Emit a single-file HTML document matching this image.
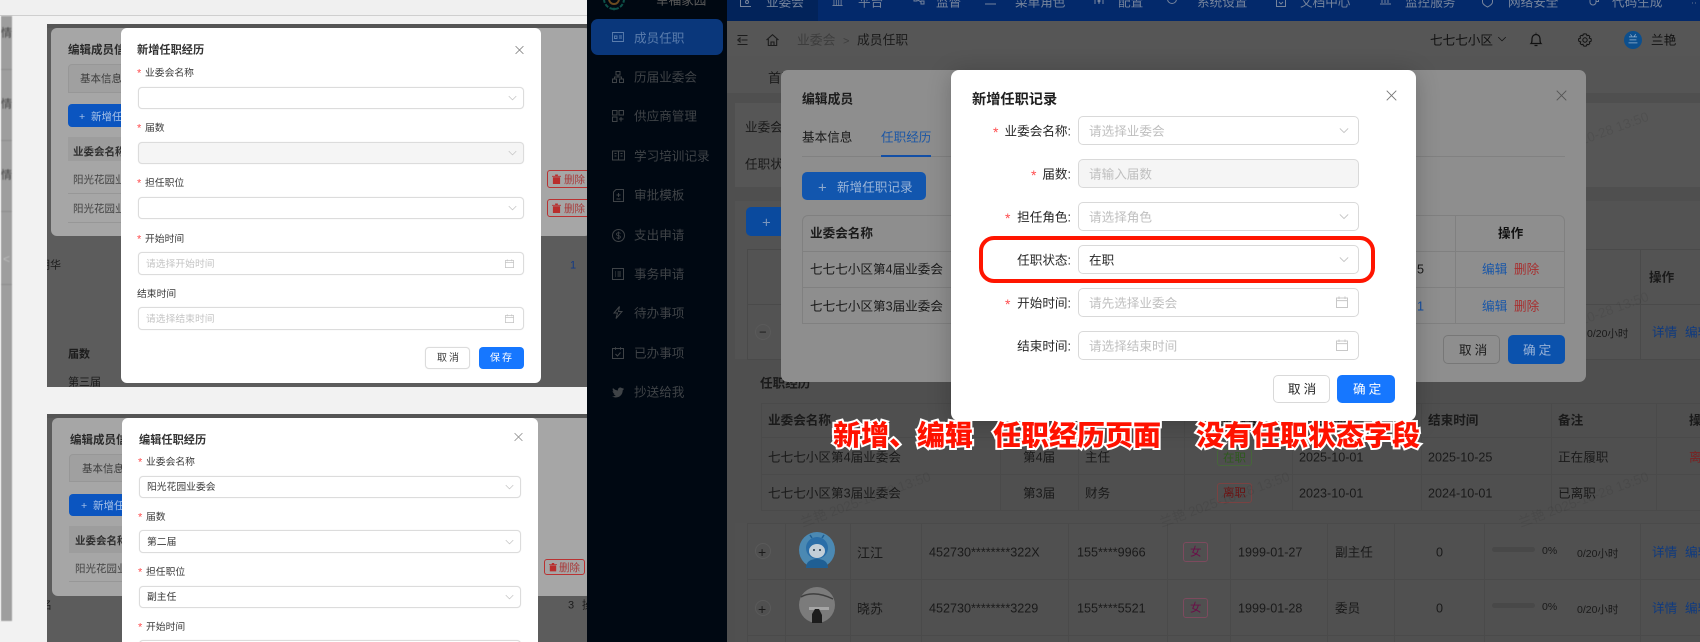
<!DOCTYPE html>
<html lang="zh">
<head>
<meta charset="utf-8">
<title>任职经历</title>
<style>
html,body{margin:0;padding:0;background:#f2f2f2;width:1700px;height:642px;overflow:hidden}
body{font-family:"Liberation Sans","Noto Sans CJK SC",sans-serif}
#r{position:relative;width:1700px;height:642px;overflow:hidden;background:#f2f2f2}
*{box-sizing:border-box}
.a{position:absolute}
.t{position:absolute;white-space:nowrap;line-height:1;transform:translateY(calc(-50% + 1px))}
.clip{position:absolute;overflow:hidden}
.ic{position:absolute;overflow:visible;fill:none}
.in{position:absolute;background:#fff;border:1px solid #d9d9d9;border-radius:5px}
.in2{position:absolute;background:#fff;border:1px solid #dcdcdc;border-radius:4px;box-shadow:0 0 1px #e5e5e5}
.main .t{font-size:12.6px;color:#1a1a1a}
.side .t{font-size:12.6px;color:#3f4347}
.nav .t{font-size:12.6px;color:#76849c}
.dlg .t{font-size:12.6px;color:#262626}
.dlg .ph{color:#bfbfbf}
.dlg .star{color:#ff4d4f;font-size:14px}
.sm .t{font-size:9.8px;color:#3a3a3a}
.sm .star{font-size:11px;color:#ff4d4f}
.sm .ph{color:#c4c4c4}
.hl{position:absolute;height:1px;background:#4a4a4a}
.vl{position:absolute;width:1px;background:#4a4a4a}
.wm{position:absolute;font-size:13.5px;line-height:1;color:rgba(0,0,0,.07);white-space:nowrap;transform:rotate(-20deg);transform-origin:center}
</style>
</head>
<body>
<div id="r">
<svg width="0" height="0" style="position:absolute">
<defs>
<symbol id="chev" viewBox="0 0 12 8"><path d="M1 1.5 6 6.5 11 1.5" fill="none" stroke="currentColor" stroke-width="1"/></symbol>
<symbol id="cal" viewBox="0 0 12 12"><path d="M.5 2h11v9.5H.5zM.5 4.6h11M3 .5V3M9 .5V3" fill="none" stroke="currentColor" stroke-width="1"/></symbol>
<symbol id="x" viewBox="0 0 12 12"><path d="M.8.8 11.2 11.2M11.2.8.8 11.2" fill="none" stroke="currentColor" stroke-width="1"/></symbol>
<symbol id="trash" viewBox="0 0 10 11"><path d="M0 2h10v1H0zM3.500.5h3V2h-3zM1 3.500h8V11H1z" fill="#b92e2d"/></symbol>
</defs>
</svg>

<!-- LEFT PANEL -->
<div class="a" style="left:0;top:0;width:587px;height:15px;background:#f0f0f0"></div>
<div class="a" style="left:0;top:15px;width:587px;height:1px;background:#cfcfcf"></div>
<div class="a" style="left:0;top:16px;width:587px;height:626px;background:#f2f2f2"></div>
<div class="a" style="left:0;top:16px;width:1px;height:605px;background:#fff"></div>

<div class="clip" style="left:1px;top:16px;width:11px;height:605px;background:#9e9e9e;filter:blur(.4px)">
  <div class="t" style="left:0;top:17px;font-size:11px;color:#444">情</div>
  <div class="t" style="left:0;top:88px;font-size:11px;color:#444">情</div>
  <div class="t" style="left:0;top:159px;font-size:11px;color:#444">情</div>
  <div class="a" style="left:0;top:53px;width:11px;height:1px;background:#8d8d8d"></div>
  <div class="a" style="left:0;top:124px;width:11px;height:1px;background:#8d8d8d"></div>
  <div class="a" style="left:0;top:195px;width:11px;height:1px;background:#8d8d8d"></div>
  <div class="t" style="left:2px;top:242px;font-size:12px;color:#bbb">&lt;</div>
  <div class="a" style="left:0;top:268px;width:11px;height:1px;background:#8d8d8d"></div>
</div>

<!-- screenshot 1 -->
<div class="clip" style="left:47px;top:24px;width:540px;height:363px;background:#5c5c5c;filter:blur(.35px)">
  <div class="a" style="left:0;top:0;width:540px;height:4px;background:#555"></div>
  <div class="t" style="left:-8px;top:241px;font-size:11px;color:#1c1c1c">明华</div>
  <div class="t" style="left:523px;top:241px;font-size:11px;color:#123a86">1</div>
  <div class="t" style="left:21px;top:330px;font-size:11px;font-weight:bold;color:#1c1c1c">届数</div>
  <div class="t" style="left:21px;top:358px;font-size:11px;color:#1c1c1c">第三届</div>
  <div class="a" style="left:4px;top:4px;width:540px;height:208px;background:#a6a6a6;border-radius:6px">
    <div class="t" style="left:17px;top:22px;font-size:11.5px;font-weight:bold;color:#2a2a2a">编辑成员信</div>
    <div class="a" style="left:17px;top:36px;width:60px;height:29px;border:1px solid #979797;border-radius:4px 0 0 0;background:#a0a0a0"></div>
    <div class="t" style="left:29px;top:50px;font-size:10.5px;color:#3b3b3b">基本信息</div>
    <div class="a" style="left:17px;top:76px;width:60px;height:23px;background:#0b55c0;border-radius:4px"></div>
    <div class="t" style="left:28px;top:88px;font-size:10.5px;color:#a9c3e8">+&nbsp; 新增任</div>
    <div class="a" style="left:17px;top:109px;width:60px;height:24px;background:#9d9d9d"></div>
    <div class="t" style="left:22px;top:123px;font-size:10.5px;font-weight:bold;color:#2f2f2f">业委会名称</div>
    <div class="t" style="left:22px;top:151px;font-size:10.5px;color:#444">阳光花园业</div>
    <div class="t" style="left:22px;top:180px;font-size:10.5px;color:#444">阳光花园业</div>
    <div class="a" style="left:17px;top:165px;width:70px;height:1px;background:#979797"></div>
    <div class="a" style="left:17px;top:194px;width:70px;height:1px;background:#979797"></div>
    <div class="a" style="left:496px;top:142px;width:44px;height:18px;border:1px solid #b93232;border-radius:3px"></div>
    <svg class="ic" style="left:501px;top:146px" width="9" height="10"><use href="#trash"/></svg>
    <div class="t" style="left:513px;top:151px;font-size:10.5px;color:#a83a3a">删除</div>
    <div class="a" style="left:496px;top:171px;width:44px;height:18px;border:1px solid #b93232;border-radius:3px"></div>
    <svg class="ic" style="left:501px;top:175px" width="9" height="10"><use href="#trash"/></svg>
    <div class="t" style="left:513px;top:180px;font-size:10.5px;color:#a83a3a">删除</div>
  </div>
</div>

<div class="a dlg sm" style="left:121px;top:28px;width:420px;height:355px;background:#fff;border-radius:6px;filter:blur(.3px)">
  <div class="t" style="left:16px;top:22px;font-size:11.2px;font-weight:bold;color:#333">新增任职经历</div>
  <svg class="ic" style="left:394px;top:17px;color:#777" width="9" height="10"><use href="#x"/></svg>
  <div class="t star" style="left:16px;top:45px">*</div><div class="t" style="left:24px;top:45px">业委会名称</div>
  <div class="in2" style="left:16.5px;top:58.5px;width:386px;height:22px"></div>
  <svg class="ic" style="left:387px;top:67px;color:#c4c4c4" width="9" height="6"><use href="#chev"/></svg>
  <div class="t star" style="left:16px;top:100px">*</div><div class="t" style="left:24px;top:100px">届数</div>
  <div class="in2" style="left:16.5px;top:113.5px;width:386px;height:22px;background:#f5f5f5"></div>
  <svg class="ic" style="left:387px;top:122px;color:#c4c4c4" width="9" height="6"><use href="#chev"/></svg>
  <div class="t star" style="left:16px;top:155px">*</div><div class="t" style="left:24px;top:155px">担任职位</div>
  <div class="in2" style="left:16.5px;top:169px;width:386px;height:22px"></div>
  <svg class="ic" style="left:387px;top:177px;color:#c4c4c4" width="9" height="6"><use href="#chev"/></svg>
  <div class="t star" style="left:16px;top:211px">*</div><div class="t" style="left:24px;top:211px">开始时间</div>
  <div class="in2" style="left:16.5px;top:224px;width:386px;height:23px"></div>
  <div class="t ph" style="left:25px;top:236px">请选择开始时间</div>
  <svg class="ic" style="left:384px;top:231px;color:#c4c4c4" width="9" height="9"><use href="#cal"/></svg>
  <div class="t" style="left:16px;top:266px">结束时间</div>
  <div class="in2" style="left:16.5px;top:279px;width:386px;height:23px"></div>
  <div class="t ph" style="left:25px;top:291px">请选择结束时间</div>
  <svg class="ic" style="left:384px;top:286px;color:#c4c4c4" width="9" height="9"><use href="#cal"/></svg>
  <div class="in2" style="left:304px;top:319px;width:45px;height:22px"></div>
  <div class="t" style="left:316px;top:330px;letter-spacing:2px;font-size:10px">取消</div>
  <div class="a" style="left:358px;top:319px;width:45px;height:22px;background:#1677ff;border-radius:4px"></div>
  <div class="t" style="left:369px;top:330px;letter-spacing:2px;font-size:10px;color:#fff">保存</div>
</div>

<!-- screenshot 2 -->
<div class="clip" style="left:47px;top:414px;width:540px;height:228px;background:#5c5c5c;filter:blur(.35px)">
  <div class="a" style="left:0;top:0;width:540px;height:4px;background:#555"></div>
  <div class="t" style="left:-6px;top:191px;font-size:11px;color:#1c1c1c">名</div>
  <div class="t" style="left:521px;top:191px;font-size:11px;color:#1c1c1c">3</div>
  <div class="t" style="left:535px;top:191px;font-size:11px;color:#1c1c1c">操</div>
  <div class="a" style="left:5px;top:4px;width:540px;height:178px;background:#a6a6a6;border-radius:6px">
    <div class="t" style="left:18px;top:22px;font-size:11.5px;font-weight:bold;color:#2a2a2a">编辑成员信</div>
    <div class="a" style="left:17px;top:36px;width:60px;height:28px;border:1px solid #979797;border-radius:4px 0 0 0;background:#a0a0a0"></div>
    <div class="t" style="left:30px;top:50px;font-size:10.5px;color:#3b3b3b">基本信息</div>
    <div class="a" style="left:17px;top:76px;width:60px;height:22px;background:#0b55c0;border-radius:4px"></div>
    <div class="t" style="left:29px;top:87px;font-size:10.5px;color:#a9c3e8">+&nbsp; 新增任</div>
    <div class="a" style="left:17px;top:108px;width:60px;height:27px;background:#9d9d9d"></div>
    <div class="t" style="left:23px;top:122px;font-size:10.5px;font-weight:bold;color:#2f2f2f">业委会名称</div>
    <div class="t" style="left:23px;top:150px;font-size:10.5px;color:#444">阳光花园业</div>
    <div class="a" style="left:17px;top:163px;width:70px;height:1px;background:#979797"></div>
    <div class="a" style="left:492px;top:141px;width:41px;height:16px;border:1px solid #b93232;border-radius:3px"></div>
    <svg class="ic" style="left:497px;top:144px" width="8" height="10"><use href="#trash"/></svg>
    <div class="t" style="left:507px;top:149px;font-size:10.5px;color:#a83a3a">删除</div>
  </div>
</div>

<div class="a dlg sm" style="left:122px;top:418px;width:416px;height:240px;background:#fff;border-radius:6px;filter:blur(.3px)">
  <div class="t" style="left:17px;top:22px;font-size:11.2px;font-weight:bold;color:#333">编辑任职经历</div>
  <svg class="ic" style="left:392px;top:14px;color:#888" width="9" height="10"><use href="#x"/></svg>
  <div class="t star" style="left:16px;top:44px">*</div><div class="t" style="left:24px;top:44px">业委会名称</div>
  <div class="in2" style="left:17px;top:58px;width:382px;height:22px"></div>
  <div class="t" style="left:25px;top:69px">阳光花园业委会</div>
  <svg class="ic" style="left:383px;top:66px;color:#c4c4c4" width="9" height="6"><use href="#chev"/></svg>
  <div class="t star" style="left:16px;top:99px">*</div><div class="t" style="left:24px;top:99px">届数</div>
  <div class="in2" style="left:17px;top:112px;width:382px;height:23px"></div>
  <div class="t" style="left:25px;top:124px">第二届</div>
  <svg class="ic" style="left:383px;top:121px;color:#c4c4c4" width="9" height="6"><use href="#chev"/></svg>
  <div class="t star" style="left:16px;top:154px">*</div><div class="t" style="left:24px;top:154px">担任职位</div>
  <div class="in2" style="left:17px;top:168px;width:382px;height:22px"></div>
  <div class="t" style="left:25px;top:179px">副主任</div>
  <svg class="ic" style="left:383px;top:176px;color:#c4c4c4" width="9" height="6"><use href="#chev"/></svg>
  <div class="t star" style="left:16px;top:209px">*</div><div class="t" style="left:24px;top:209px">开始时间</div>
  <div class="in2" style="left:17px;top:222px;width:382px;height:23px"></div>
</div>

<!-- MAIN BG -->
<div class="a main" style="left:587px;top:0;width:1113px;height:642px;background:#4f4f4f;overflow:hidden">
  <div class="a" style="left:140px;top:21px;right:0;height:35px;background:#565656"></div>
  <div class="a" style="left:140px;top:56px;right:0;height:37px;background:#555"></div>
  <div class="a" style="left:148px;top:103px;right:0;height:84px;background:#565656"></div>
  <div class="a" style="left:148px;top:201px;right:0;height:158px;background:#535353"></div>
  <div class="a" style="left:148px;top:523px;right:0;height:119px;background:#505050"></div>
</div>
<div class="main">
  <div class="t" style="left:768px;top:77px;font-size:13px">首页</div>
  <div class="t" style="left:745px;top:127px">业委会</div>
  <div class="t" style="left:745px;top:164px">任职状态</div>
  <div class="a" style="left:746px;top:207px;width:60px;height:29px;background:#0a4a9e;border-radius:5px"></div>
  <div class="t" style="left:762px;top:222px;font-size:15px;color:#7c97bd">+</div>

  <!-- upper table -->
  <div class="hl" style="left:747px;top:249px;width:953px"></div>
  <div class="hl" style="left:747px;top:304px;width:953px"></div>
  <div class="hl" style="left:747px;top:359px;width:953px"></div>
  <div class="vl" style="left:747px;top:249px;height:110px"></div>
  <div class="vl" style="left:1640px;top:249px;height:110px"></div>
  <div class="t" style="left:1649px;top:277px;font-weight:bold">操作</div>
  <div class="a" style="left:755px;top:324px;width:16px;height:16px;border:1px solid #5a5a5a;border-radius:50%"></div>
  <div class="t" style="left:759px;top:331px;font-size:13px">−</div>
  <div class="t" style="left:1587px;top:333px;font-size:10.5px">0/20小时</div>
  <div class="t" style="left:1652px;top:332px;color:#0e3a80">详情</div>
  <div class="t" style="left:1685px;top:332px;color:#0e3a80">编辑</div>

  <!-- sub table -->
  <div class="t" style="left:760px;top:383px;font-weight:bold">任职经历</div>
  <div class="hl" style="left:761px;top:403px;width:939px"></div>
  <div class="hl" style="left:761px;top:437px;width:939px"></div>
  <div class="hl" style="left:761px;top:474px;width:939px"></div>
  <div class="hl" style="left:761px;top:510px;width:939px"></div>
  <div class="vl" style="left:761px;top:403px;height:107px"></div>
  <div class="vl" style="left:1000px;top:403px;height:107px"></div>
  <div class="vl" style="left:1078px;top:403px;height:107px"></div>
  <div class="vl" style="left:1184px;top:403px;height:107px"></div>
  <div class="vl" style="left:1292px;top:403px;height:107px"></div>
  <div class="vl" style="left:1421px;top:403px;height:107px"></div>
  <div class="vl" style="left:1551px;top:403px;height:107px"></div>
  <div class="vl" style="left:1656px;top:403px;height:107px"></div>
  <div class="t" style="left:768px;top:420px;font-weight:bold">业委会名称</div>
  <div class="t" style="left:1023px;top:420px;font-weight:bold">届数</div>
  <div class="t" style="left:1085px;top:420px;font-weight:bold">担任角色</div>
  <div class="t" style="left:1210px;top:420px;font-weight:bold">任职状态</div>
  <div class="t" style="left:1299px;top:420px;font-weight:bold">开始时间</div>
  <div class="t" style="left:1428px;top:420px;font-weight:bold">结束时间</div>
  <div class="t" style="left:1558px;top:420px;font-weight:bold">备注</div>
  <div class="t" style="left:1689px;top:420px;font-weight:bold">操作</div>
  <div class="t" style="left:768px;top:457px">七七七小区第4届业委会</div>
  <div class="t" style="left:1023px;top:457px">第4届</div>
  <div class="t" style="left:1085px;top:457px">主任</div>
  <div class="a" style="left:1217px;top:449px;width:35px;height:17px;border:1px solid #46663a;border-radius:3px"></div>
  <div class="t" style="left:1223px;top:458px;font-size:11.5px;color:#2e5a1e">在职</div>
  <div class="t" style="left:1299px;top:457px">2025-10-01</div>
  <div class="t" style="left:1428px;top:457px">2025-10-25</div>
  <div class="t" style="left:1558px;top:457px">正在履职</div>
  <div class="t" style="left:1689px;top:457px;color:#7a2323">离职</div>
  <div class="t" style="left:768px;top:493px">七七七小区第3届业委会</div>
  <div class="t" style="left:1023px;top:493px">第3届</div>
  <div class="t" style="left:1085px;top:493px">财务</div>
  <div class="a" style="left:1217px;top:483px;width:35px;height:20px;border:1px solid #7a4242;border-radius:3px"></div>
  <div class="t" style="left:1223px;top:493px;font-size:11.5px;color:#6c1414">离职</div>
  <div class="t" style="left:1299px;top:493px">2023-10-01</div>
  <div class="t" style="left:1428px;top:493px">2024-10-01</div>
  <div class="t" style="left:1558px;top:493px">已离职</div>

  <!-- lower rows -->
  <div class="hl" style="left:747px;top:523px;width:953px"></div>
  <div class="hl" style="left:747px;top:579px;width:953px"></div>
  <div class="hl" style="left:747px;top:635px;width:953px"></div>
  <div class="vl" style="left:747px;top:523px;height:119px"></div>
  <div class="vl" style="left:785px;top:523px;height:119px"></div>
  <div class="vl" style="left:850px;top:523px;height:119px"></div>
  <div class="vl" style="left:921px;top:523px;height:119px"></div>
  <div class="vl" style="left:1068px;top:523px;height:119px"></div>
  <div class="vl" style="left:1167px;top:523px;height:119px"></div>
  <div class="vl" style="left:1230px;top:523px;height:119px"></div>
  <div class="vl" style="left:1327px;top:523px;height:119px"></div>
  <div class="vl" style="left:1394px;top:523px;height:119px"></div>
  <div class="vl" style="left:1484px;top:523px;height:119px"></div>
  <div class="vl" style="left:1640px;top:523px;height:119px"></div>

  <div class="a" style="left:755px;top:543px;width:16px;height:16px;border:1px solid #5a5a5a;border-radius:50%"></div>
  <div class="t" style="left:758px;top:551px;font-size:14px">+</div>
  <svg class="ic" style="left:799px;top:532px" width="36" height="36" viewBox="0 0 36 36">
    <circle cx="18" cy="18" r="18" fill="#4b89b3"/>
    <path d="M7 36c0-6 4-9 11-9s11 3 11 9z" fill="#1f5f94"/>
    <circle cx="18" cy="16" r="11" fill="#2a6ea8"/>
    <ellipse cx="18" cy="19" rx="8" ry="7" fill="#c3cfd8"/>
    <path d="M13 6 11 3M23 6l2-3" stroke="#1f5f94" stroke-width="1.5"/>
    <circle cx="15" cy="18" r="1" fill="#234"/><circle cx="21" cy="18" r="1" fill="#234"/>
  </svg>
  <div class="t" style="left:857px;top:552px;font-size:13px">江江</div>
  <div class="t" style="left:929px;top:552px">452730********322X</div>
  <div class="t" style="left:1077px;top:552px">155****9966</div>
  <div class="a" style="left:1183px;top:542px;width:25px;height:20px;border:1px solid #7d4a5e;border-radius:3px"></div>
  <div class="t" style="left:1190px;top:552px;font-size:11.5px;color:#6a0f48">女</div>
  <div class="t" style="left:1238px;top:552px">1999-01-27</div>
  <div class="t" style="left:1335px;top:552px">副主任</div>
  <div class="t" style="left:1436px;top:552px">0</div>
  <div class="a" style="left:1492px;top:547px;width:43px;height:5px;background:#484848;border-radius:3px"></div>
  <div class="t" style="left:1542px;top:550px;font-size:10.5px">0%</div>
  <div class="t" style="left:1577px;top:553px;font-size:10.5px">0/20小时</div>
  <div class="t" style="left:1652px;top:552px;color:#0e3a80">详情</div>
  <div class="t" style="left:1685px;top:552px;color:#0e3a80">编辑</div>

  <div class="a" style="left:755px;top:600px;width:16px;height:16px;border:1px solid #5a5a5a;border-radius:50%"></div>
  <div class="t" style="left:758px;top:608px;font-size:14px">+</div>
  <svg class="ic" style="left:799px;top:587px" width="36" height="36" viewBox="0 0 36 36">
    <circle cx="18" cy="18" r="18" fill="#7b7b7b"/>
    <path d="M2 10C8 6 20 5 34 12" stroke="#3f3f3f" stroke-width="1.4" fill="none"/>
    <path d="M10 20h20v3H10z" fill="#a5a5a5"/>
    <path d="M13 36V27l3-5 4 0 3 6v8z" fill="#1c1c1c"/>
  </svg>
  <div class="t" style="left:857px;top:608px;font-size:13px">晓苏</div>
  <div class="t" style="left:929px;top:608px">452730********3229</div>
  <div class="t" style="left:1077px;top:608px">155****5521</div>
  <div class="a" style="left:1183px;top:598px;width:25px;height:20px;border:1px solid #7d4a5e;border-radius:3px"></div>
  <div class="t" style="left:1190px;top:608px;font-size:11.5px;color:#6a0f48">女</div>
  <div class="t" style="left:1238px;top:608px">1999-01-28</div>
  <div class="t" style="left:1335px;top:608px">委员</div>
  <div class="t" style="left:1436px;top:608px">0</div>
  <div class="a" style="left:1492px;top:603px;width:43px;height:5px;background:#484848;border-radius:3px"></div>
  <div class="t" style="left:1542px;top:606px;font-size:10.5px">0%</div>
  <div class="t" style="left:1577px;top:609px;font-size:10.5px">0/20小时</div>
  <div class="t" style="left:1652px;top:608px;color:#0e3a80">详情</div>
  <div class="t" style="left:1685px;top:608px;color:#0e3a80">编辑</div>

  <!-- watermarks -->
  <div class="wm" style="left:1515px;top:133px">兰艳 2025-10-28 13:50</div>
  <div class="wm" style="left:1515px;top:313px">兰艳 2025-10-28 13:50</div>
  <div class="wm" style="left:1515px;top:493px">兰艳 2025-10-28 13:50</div>
  <div class="wm" style="left:797px;top:493px">兰艳 2025-10-28 13:50</div>
  <div class="wm" style="left:1156px;top:493px">兰艳 2025-10-28 13:50</div>

  <!-- header bar content -->
  <svg class="ic" style="left:737px;top:35px;color:#1c1c1c" width="11" height="10" viewBox="0 0 11 10"><path d="M.5.5h10M4.500 5h6M.5 9.500h10M3 3 .7 5 3 7z" stroke="currentColor" stroke-width="1"/></svg>
  <svg class="ic" style="left:766px;top:34px;color:#1c1c1c" width="13" height="12" viewBox="0 0 13 12"><path d="M.5 6 6.500.7 12.500 6M2.300 5v6.500h8.400V5M5 11.500V8h3v3.500" stroke="currentColor" stroke-width="1.1"/></svg>
  <div class="t" style="left:797px;top:40px;color:#3d3d3d;font-size:12.8px">业委会</div>
  <div class="t" style="left:843px;top:41px;color:#3d3d3d;font-size:11px">&gt;</div>
  <div class="t" style="left:857px;top:40px;font-size:12.8px">成员任职</div>
  <div class="t" style="left:1430px;top:40px;font-size:12.6px;color:#111">七七七小区</div>
  <svg class="ic" style="left:1497px;top:36px;color:#111" width="10" height="6"><use href="#chev"/></svg>
  <svg class="ic" style="left:1530px;top:32px;color:#111" width="12" height="15" viewBox="0 0 12 15"><path d="M1 11.500c1-1 1-2 1-5a4 4 0 0 1 8 0c0 3 0 4 1 5zM4.500 13.500h3M6 1.500V.8" stroke="currentColor" stroke-width="1.2"/></svg>
  <svg class="ic" style="left:1578px;top:33px;color:#111" width="14" height="14" viewBox="0 0 14 14"><path d="M7 .8l1.600.4.4 1.600 1.600-.5 1.200 1.200-.5 1.600 1.600.4.4 1.500-.4 1.500-1.600.4.5 1.600-1.200 1.200-1.600-.5-.4 1.600-1.600.4-1.600-.4-.4-1.600-1.600.5-1.200-1.200.5-1.600-1.600-.4L.5 7l.4-1.500 1.600-.4L2 3.500l1.200-1.200 1.600.5.4-1.600z" stroke="currentColor"/><circle cx="7" cy="7" r="2.200" stroke="currentColor"/></svg>
  <div class="a" style="left:1624px;top:31px;width:18px;height:18px;border-radius:50%;background:#0c4f8e"></div>
  <div class="t" style="left:1628px;top:40px;font-size:10px;color:#99b5d3">兰</div>
  <div class="t" style="left:1651px;top:40px;color:#111">兰艳</div>
</div>

<!-- SIDEBAR -->
<div class="a side" style="left:587px;top:0;width:140px;height:642px;background:#000812">
  <svg class="ic" style="left:15px;top:-8px" width="24" height="20" viewBox="0 0 24 20"><path d="M2 7a10 10 0 0 0 20 0" stroke="#0d5148" stroke-width="2" stroke-dasharray="4 1.500"/><path d="M7 7a5 5 0 0 0 10 0" stroke="#6b4a1f" stroke-width="2"/><circle cx="12" cy="17" r="1.400" fill="#0d5148"/></svg>
  <div class="t" style="left:69px;top:0;color:#5a5a5a">幸福家园</div>
  <div class="a" style="left:4px;top:19px;width:132px;height:36px;background:#0a377b;border-radius:7px"></div>
  <div class="t" style="left:47px;top:38px;color:#5b7dad">成员任职</div>
  <div class="t" style="left:47px;top:77px">历届业委会</div>
  <div class="t" style="left:47px;top:116px">供应商管理</div>
  <div class="t" style="left:47px;top:156px">学习培训记录</div>
  <div class="t" style="left:47px;top:195px">审批模板</div>
  <div class="t" style="left:47px;top:235px">支出申请</div>
  <div class="t" style="left:47px;top:274px">事务申请</div>
  <div class="t" style="left:47px;top:313px">待办事项</div>
  <div class="t" style="left:47px;top:353px">已办事项</div>
  <div class="t" style="left:47px;top:392px">抄送给我</div>
  <svg class="ic" style="left:25px;top:32px;color:#5b7dad" width="12" height="10" viewBox="0 0 12 10"><path d="M.5.5h11v9H.5zM2.500 4h2.500v2.500H2.500zM7 4h3M7 6h3" stroke="currentColor" stroke-width=".9"/></svg>
  <svg class="ic" style="left:25px;top:71px;color:#3f4347" width="12" height="12" viewBox="0 0 12 12"><path d="M4 .5h4v3.500H4zM.5 8h4v3.500h-4zM7.500 8h4v3.500h-4zM6 4v2M2.500 8V6h7v2" stroke="currentColor"/></svg>
  <svg class="ic" style="left:25px;top:110px;color:#3f4347" width="12" height="12" viewBox="0 0 12 12"><path d="M.5.5h4.500V5H.5zM7 .5h4.500V5H7zM.5 7H5v4.500H.5zM9 7v4.500M7 9h4.500" stroke="currentColor"/></svg>
  <svg class="ic" style="left:25px;top:150px;color:#3f4347" width="13" height="11" viewBox="0 0 13 11"><path d="M.5 1h12v9H.5zM6.500 1v9M2.500 3.500h2M2.500 6h2M8.500 3.500h2M8.500 6h2" stroke="currentColor"/></svg>
  <svg class="ic" style="left:26px;top:189px;color:#3f4347" width="11" height="13" viewBox="0 0 11 13"><path d="M3 .5h7.500v12H.5V3zM5.500 4v4M3.500 6h4M3.500 10h4" stroke="currentColor"/></svg>
  <svg class="ic" style="left:25px;top:229px;color:#3f4347" width="13" height="13" viewBox="0 0 13 13"><circle cx="6.500" cy="6.500" r="6" stroke="currentColor"/><path d="M8.500 4.500c-1-1.200-4-1-4 .7 0 1.900 4 .9 4 2.800 0 1.600-3 1.700-4 .5M6.500 2.500v8" stroke="currentColor" stroke-width=".8"/></svg>
  <svg class="ic" style="left:25px;top:268px;color:#3f4347" width="12" height="12" viewBox="0 0 12 12"><path d="M.5.5h11v11H.5zM3 4h1M3 6h1M3 8h1M5.500 4h3.500M5.500 6h3.500M5.500 8h3.500" stroke="currentColor"/></svg>
  <svg class="ic" style="left:26px;top:306px;color:#3f4347" width="10" height="13" viewBox="0 0 10 13"><path d="M6.500.5 1 7h3.500L3 12.500 9 5.500H5.500z" stroke="currentColor"/></svg>
  <svg class="ic" style="left:25px;top:347px;color:#3f4347" width="12" height="12" viewBox="0 0 12 12"><path d="M.5 1.500h11v10H.5zM3.500.2v2.500M8.500.2v2.500M3.500 7l2 2 3-3.500" stroke="currentColor"/></svg>
  <svg class="ic" style="left:25px;top:387px" width="12" height="11" viewBox="0 0 12 11"><path d="M12 1.600c-.4.2-.9.3-1.400.4.5-.3.9-.8 1-1.300-.5.3-1 .5-1.500.6C9.600.8 9 .5 8.300.5 7 .5 5.900 1.600 5.900 3c0 .2 0 .4.100.5C4 3.400 2.200 2.400 1 1c-.7 1.200-.3 2.600.7 3.300-.4 0-.8-.1-1.100-.3 0 1.200.8 2.200 2 2.400-.4.100-.7.100-1.100.1.300 1 1.200 1.700 2.300 1.700-1.200.9-2.600 1.300-3.800 1.100C1 10 2.300 10.500 3.800 10.500c4.500 0 7-3.800 6.900-7.100.5-.4.900-.8 1.300-1.800z" fill="#3f4347"/></svg>
</div>

<!-- TOP NAV -->
<div class="clip nav" style="left:727px;top:0;width:973px;height:21px;background:#03296b">
  <div class="a" style="left:0;top:0;width:91px;height:21px;background:#02235a"></div>
  <svg class="ic" style="left:13px;top:-4px;color:#76849c" width="12" height="11" viewBox="0 0 12 11"><path d="M.5.500V10.500H11" stroke="currentColor"/><circle cx="7" cy="6" r="1.500" stroke="currentColor"/></svg>
  <div class="t" style="left:39px;top:2px">业委会</div>
  <div class="t" style="left:105px;top:2px;font-size:11px">皿</div>
  <div class="t" style="left:131px;top:2px">平台</div>
  <svg class="ic" style="left:186px;top:-3px;color:#76849c" width="12" height="9" viewBox="0 0 12 9"><path d="M1 1h3v3H1zM8 4h3v3H8zM4 2.500 8 5" stroke="currentColor"/></svg>
  <div class="t" style="left:209px;top:2px">监督</div>
  <svg class="ic" style="left:258px;top:-3px;color:#76849c" width="11" height="9" viewBox="0 0 11 9"><path d="M0 1.500h11M0 7h11" stroke="currentColor"/></svg>
  <div class="t" style="left:288px;top:2px">菜单角色</div>
  <svg class="ic" style="left:366px;top:-3px;color:#76849c" width="12" height="9" viewBox="0 0 12 9"><path d="M2 0v7M6 0v7M10 0v7" stroke="currentColor"/><circle cx="6" cy="4" r="1" stroke="currentColor"/></svg>
  <div class="t" style="left:391px;top:2px">配置</div>
  <svg class="ic" style="left:439px;top:-3px;color:#76849c" width="12" height="10" viewBox="0 0 12 10"><circle cx="6" cy="2" r="4.500" stroke="currentColor"/></svg>
  <div class="t" style="left:470px;top:2px">系统设置</div>
  <svg class="ic" style="left:549px;top:-2px;color:#76849c" width="10" height="9" viewBox="0 0 10 9"><path d="M.5 0v8.500h9V0M3 4l2 2 2-2" stroke="currentColor"/></svg>
  <div class="t" style="left:573px;top:2px">文档中心</div>
  <svg class="ic" style="left:653px;top:-3px;color:#76849c" width="11" height="9" viewBox="0 0 11 9"><path d="M0 7h11M2 6V2M5 6V0M8 6V3" stroke="currentColor"/></svg>
  <div class="t" style="left:678px;top:2px">监控服务</div>
  <svg class="ic" style="left:755px;top:-3px;color:#76849c" width="11" height="11" viewBox="0 0 11 11"><path d="M.5 0v5c0 2 2 3.500 5 5 3-1.500 5-3 5-5V0" stroke="currentColor"/></svg>
  <div class="t" style="left:781px;top:2px">网络安全</div>
  <svg class="ic" style="left:862px;top:-3px;color:#76849c" width="12" height="10" viewBox="0 0 12 10"><path d="M1 0v5a3 3 0 0 0 6 0V0M7 2h2.500v2.500H7" stroke="currentColor"/></svg>
  <div class="t" style="left:885px;top:2px">代码生成</div>
  <div class="t" style="left:964px;top:2px;font-size:9px">··</div>
</div>

<!-- EDIT DIALOG -->
<div class="a main" style="left:781px;top:70px;width:805px;height:312px;background:#8e8e8e;border-radius:7px">
  <div class="t" style="left:21px;top:29px;font-weight:bold;font-size:12.8px;color:#1c1c1c">编辑成员</div>
  <div class="t" style="left:21px;top:67px;font-size:12.6px">基本信息</div>
  <div class="t" style="left:100px;top:67px;font-size:12.6px;color:#1c57a5">任职经历</div>
  <div class="a" style="left:21px;top:86px;width:763px;height:1px;background:#818181"></div>
  <div class="a" style="left:100px;top:85px;width:50px;height:2px;background:#134fa5"></div>
  <div class="a" style="left:21px;top:102px;width:124px;height:28px;background:#1256ae;border-radius:5px"></div>
  <div class="t" style="left:37px;top:117px;font-size:15px;color:#8ea8cc">+</div>
  <div class="t" style="left:56px;top:117px;color:#9bb5d8">新增任职记录</div>
  <div class="a" style="left:21px;top:145px;width:763px;height:109px;border:1px solid #808080;border-radius:6px 6px 0 0"></div>
  <div class="a" style="left:21px;top:181px;width:763px;height:1px;background:#808080"></div>
  <div class="a" style="left:21px;top:217px;width:763px;height:1px;background:#808080"></div>
  <div class="a" style="left:674px;top:145px;width:1px;height:109px;background:#808080"></div>
  <div class="t" style="left:29px;top:163px;font-weight:bold">业委会名称</div>
  <div class="t" style="left:29px;top:199px">七七七小区第4届业委会</div>
  <div class="t" style="left:29px;top:236px">七七七小区第3届业委会</div>
  <div class="t" style="left:636px;top:199px">5</div>
  <div class="t" style="left:636px;top:236px;color:#124ea3">1</div>
  <div class="t" style="left:717px;top:163px;font-weight:bold;color:#111">操作</div>
  <div class="t" style="left:701px;top:199px;color:#1856a8">编辑</div>
  <div class="t" style="left:733px;top:199px;color:#a82e2e">删除</div>
  <div class="t" style="left:701px;top:236px;color:#1856a8">编辑</div>
  <div class="t" style="left:733px;top:236px;color:#a82e2e">删除</div>
  <svg class="ic" style="left:775px;top:20px;color:#555" width="11" height="11"><use href="#x"/></svg>
  <div class="a" style="left:662px;top:265px;width:57px;height:29px;border:1px solid #777;border-radius:5px"></div>
  <div class="t" style="left:678px;top:280px;letter-spacing:3px">取消</div>
  <div class="a" style="left:727px;top:265px;width:57px;height:29px;background:#0b52ad;border-radius:5px"></div>
  <div class="t" style="left:742px;top:280px;letter-spacing:3px;color:#97b1d6">确定</div>
</div>

<!-- MAIN DIALOG -->
<div class="a dlg" style="left:951px;top:70px;width:465px;height:351px;background:#fff;border-radius:8px;box-shadow:0 3px 24px rgba(0,0,0,.22)">
  <div class="t" style="left:21px;top:29px;font-size:14.2px;font-weight:bold;color:#1f1f1f">新增任职记录</div>
  <svg class="ic" style="left:435px;top:20px;color:#777" width="11" height="11"><use href="#x"/></svg>

  <div class="in" style="left:127px;top:46px;width:281px;height:29px"></div>
  <div class="t star" style="left:42px;top:61px">*</div>
  <div class="t" style="right:345px;top:61px">业委会名称:</div>
  <div class="t ph" style="left:138px;top:61px">请选择业委会</div>
  <svg class="ic" style="left:388px;top:57px;color:#c0c0c0" width="10" height="7"><use href="#chev"/></svg>

  <div class="in" style="left:127px;top:89px;width:281px;height:29px;background:#f5f5f5"></div>
  <div class="t star" style="left:80px;top:104px">*</div>
  <div class="t" style="right:345px;top:104px">届数:</div>
  <div class="t ph" style="left:138px;top:104px">请输入届数</div>

  <div class="in" style="left:127px;top:132px;width:281px;height:29px"></div>
  <div class="t star" style="left:54px;top:147px">*</div>
  <div class="t" style="right:345px;top:147px">担任角色:</div>
  <div class="t ph" style="left:138px;top:147px">请选择角色</div>
  <svg class="ic" style="left:388px;top:143px;color:#c0c0c0" width="10" height="7"><use href="#chev"/></svg>

  <div class="in" style="left:127px;top:175px;width:281px;height:29px"></div>
  <div class="t" style="right:345px;top:190px">任职状态:</div>
  <div class="t" style="left:138px;top:190px">在职</div>
  <svg class="ic" style="left:388px;top:186px;color:#c0c0c0" width="10" height="7"><use href="#chev"/></svg>

  <div class="in" style="left:127px;top:218px;width:281px;height:29px"></div>
  <div class="t star" style="left:54px;top:233px">*</div>
  <div class="t" style="right:345px;top:233px">开始时间:</div>
  <div class="t ph" style="left:138px;top:233px">请先选择业委会</div>
  <svg class="ic" style="left:385px;top:226px;color:#c8c8c8" width="12" height="12"><use href="#cal"/></svg>

  <div class="in" style="left:127px;top:261px;width:281px;height:29px"></div>
  <div class="t" style="right:345px;top:276px">结束时间:</div>
  <div class="t ph" style="left:138px;top:276px">请选择结束时间</div>
  <svg class="ic" style="left:385px;top:269px;color:#c8c8c8" width="12" height="12"><use href="#cal"/></svg>

  <div class="in" style="left:322px;top:305px;width:57px;height:28px"></div>
  <div class="t" style="left:337px;top:319px;letter-spacing:3px">取消</div>
  <div class="a" style="left:386px;top:305px;width:58px;height:28px;background:#1677ff;border-radius:5px"></div>
  <div class="t" style="left:402px;top:319px;letter-spacing:3px;color:#fff">确定</div>

  <div class="a" style="left:28px;top:166px;width:396px;height:47px;border:4.5px solid #ff1500;border-radius:15px"></div>
</div>

<!-- ANNOTATION -->
<div style="position:absolute;left:0;top:0;width:1700px;height:642px;font-weight:900;font-size:28px;line-height:1;color:#ff1200;-webkit-text-stroke:4px #fff">
  <div class="a" style="left:833px;top:422px;white-space:nowrap;paint-order:stroke fill">新增、编辑</div>
  <div class="a" style="left:993px;top:422px;white-space:nowrap;paint-order:stroke fill">任职经历页面</div>
  <div class="a" style="left:1196px;top:422px;white-space:nowrap;paint-order:stroke fill">没有任职状态字段</div>
</div>
</div>
</body>
</html>
